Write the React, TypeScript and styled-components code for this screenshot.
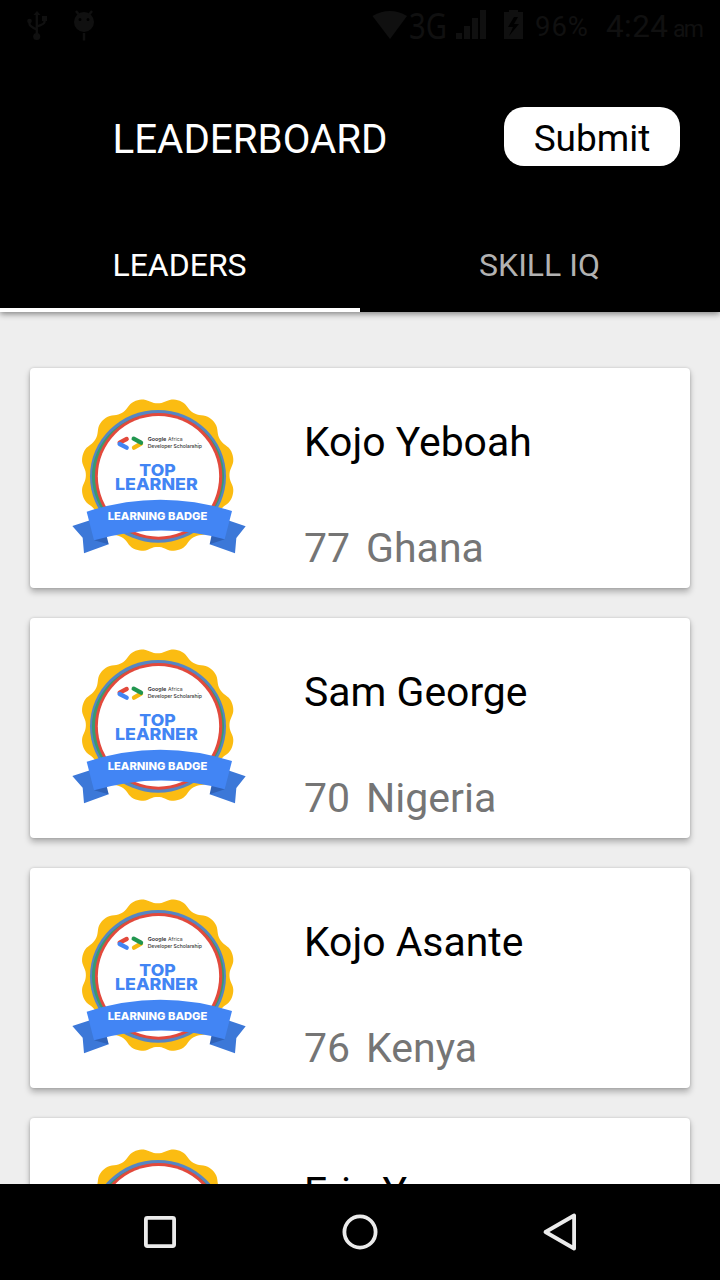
import React from "react";
import styled, { createGlobalStyle } from "styled-components";

const GlobalStyle = createGlobalStyle`
  * { box-sizing: border-box; }
  body { margin: 0; background: #000; }
`;

const Screen = styled.div`
  display: flex;
  flex-direction: column;
  width: 720px;
  height: 1280px;
  overflow: hidden;
  background: #eeeeee;
  font-family: Roboto, sans-serif;
`;

const Header = styled.header`
  position: relative;
  z-index: 1;
  flex: none;
  display: flex;
  flex-direction: column;
  height: 312px;
  background: #000;
  box-shadow: 0 2px 6px rgba(0, 0, 0, 0.45);
`;

const StatusBar = styled.div`
  display: flex;
  justify-content: space-between;
  height: 50px;
  color: #101010;
`;

const TopRow = styled.div`
  display: flex;
  align-items: center;
  justify-content: space-between;
  height: 172px;
  padding: 0 40px 0 112.5px;
`;

const Title = styled.h1`
  margin: 7px 0 0;
  font-size: 40.3px;
  line-height: 48px;
  font-weight: 400;
  color: #fff;
`;

const SubmitButton = styled.button`
  width: 176px;
  height: 59px;
  padding: 5px 0 0;
  border: 0;
  border-radius: 20px;
  background: #fff;
  color: #000;
  font-family: inherit;
  font-size: 37px;
  line-height: 54px;
`;

const Tabs = styled.nav`
  display: flex;
  height: 90px;
`;

const Tab = styled.div<{ $active?: boolean }>`
  flex: 1;
  padding: 22px 1px 0 0;
  border-bottom: 4px solid ${(p) => (p.$active ? "#fff" : "transparent")};
  color: ${(p) => (p.$active ? "#fff" : "#b2b2b2")};
  font-size: 32px;
  line-height: 42px;
  text-align: center;
`;

const List = styled.main`
  flex: 1;
  display: flex;
  flex-direction: column;
  gap: 30px;
  min-height: 0;
  overflow: hidden;
  padding: 56px 30px 0;
`;

const Card = styled.article`
  flex: none;
  display: flex;
  gap: 44px;
  height: 220px;
  padding: 17px 0 0 30px;
  border-radius: 4px;
  background: #fff;
  box-shadow: 0 4px 6px rgba(0, 0, 0, 0.27), 0 0 3px rgba(0, 0, 0, 0.16);
`;

const CardText = styled.div`
  display: flex;
  flex-direction: column;
  gap: 58px;
  padding-top: 33px;
  font-size: 41px;
  line-height: 48px;
  white-space: nowrap;
`;

const Name = styled.div`
  font-size: 40.9px;
  color: #000;
`;

const Detail = styled.div`
  display: flex;
  gap: 16px;
  color: #757575;
`;

const NavBar = styled.footer`
  flex: none;
  display: flex;
  align-items: center;
  justify-content: space-between;
  height: 96px;
  padding: 0 140px;
  background: #000;
`;

/* Outline of the twelve-lobed seal behind the badge. */
const sealPath = (() => {
  const points: string[] = [];
  for (let deg = 0; deg < 360; deg += 1.5) {
    const lobe = Math.tanh(-0.9 * Math.cos((12 * deg * Math.PI) / 180) + 0.25);
    const r = 222.5 + 12.5 * lobe;
    const a = (deg * Math.PI) / 180;
    points.push(`${(293 + r * Math.cos(a)).toFixed(1)} ${(270.5 + r * Math.sin(a)).toFixed(1)}`);
  }
  return `M${points.join("L")}Z`;
})();

const Badge = () => (
  <svg width="200" height="180" viewBox="0 0 600 540" fontFamily="Inter, sans-serif">
    <path d={sealPath} fill="#fbbc12" />
    <ellipse cx="294" cy="274" rx="204" ry="199" fill="#5585c4" />
    <ellipse cx="294" cy="274" rx="198" ry="188" fill="#3a9a70" />
    <ellipse cx="296" cy="274" rx="191" ry="190" fill="#e2493c" />
    <ellipse cx="295.5" cy="274" rx="182" ry="181" fill="#fff" />
    <g strokeWidth="13" strokeLinecap="round">
      <path d="M200 162L179 173" stroke="#e2493c" />
      <path d="M179 177L200 188" stroke="#4285f4" />
      <path d="M222 188L243 176" stroke="#f5b912" />
      <path d="M221 161L243 173" stroke="#21964f" />
    </g>
    <text x="263" y="168" fontSize="16" fontWeight="600" fill="#333" textLength="56" lengthAdjust="spacingAndGlyphs">Google</text>
    <text x="324" y="168" fontSize="16" fill="#444" textLength="44" lengthAdjust="spacingAndGlyphs">Africa</text>
    <text x="263" y="189" fontSize="16" fontWeight="500" fill="#333" textLength="163" lengthAdjust="spacingAndGlyphs">Developer Scholarship</text>
    <g fill="#4285f4" fontWeight="800" fontSize="49">
      <text x="238" y="272" textLength="109" lengthAdjust="spacingAndGlyphs">TOP</text>
      <text x="165" y="316" textLength="248" lengthAdjust="spacingAndGlyphs">LEARNER</text>
    </g>
    <path d="M37 423L90 406L146 478L72 505L68 458Z" fill="#3c78d8" />
    <path d="M557 424L504 406L449 478L525 505L529 459Z" fill="#3c78d8" />
    <path d="M102 466L138 445L146 478Z" fill="#2f62b8" />
    <path d="M494 463L456 445L449 478Z" fill="#2f62b8" />
    <path d="M80 380Q298 309 516 378L494 463Q298 408 102 466Z" fill="#4285f4" />
    <text x="143" y="405" fontSize="33" fontWeight="800" fill="#fff" textLength="299" lengthAdjust="spacingAndGlyphs">LEARNING BADGE</text>
  </svg>
);

const NoticeIcons = () => (
  <svg width="110" height="50" viewBox="0 0 110 50" fill="currentColor" stroke="currentColor">
    <path d="M37 11l3.5 4h-7z" stroke="none" />
    <circle cx="36.7" cy="36.5" r="3.5" stroke="none" />
    <circle cx="29.5" cy="21" r="2.3" stroke="none" />
    <path d="M42 16h5v5h-5z" stroke="none" />
    <path d="M36.8 14v21M29.5 21v3q0 2 7 5.5M44.5 19v3q0 2 -7.5 4.5" fill="none" strokeWidth="2.3" />
    <path d="M76 11l4 5M92 11l-4 5M84 33v7.5" fill="none" strokeWidth="2.4" />
    <path fillRule="evenodd" stroke="none" d="M84 12a10 10 0 1 0 0 20a10 10 0 1 0 0-20zM80 18a1.5 1.5 0 1 1 0 3a1.5 1.5 0 1 1 0-3zM88 18a1.5 1.5 0 1 1 0 3a1.5 1.5 0 1 1 0-3z" />
  </svg>
);

const SystemIcons = () => (
  <svg width="360" height="50" viewBox="0 0 360 50" fill="currentColor">
    <path d="M12.5 16q17.5-10 34.5 0L30 39z" />
    <text x="49" y="39" fontSize="36" fontFamily="Noto Sans" textLength="38" lengthAdjust="spacingAndGlyphs">3G</text>
    <path d="M96 33h6v6h-6zM104 26h6v13h-6zM112 18h6v21h-6zM120 10h6v29h-6z" />
    <path fillRule="evenodd" d="M144 12h5v-2h9v2h5v27h-19zM154 17l-6 10h5l-4 9l10-12h-5l4-7z" />
    <text x="175" y="36" fontSize="27.5" textLength="53">96%</text>
    <text x="246" y="37" fontSize="31.5" textLength="62">4:24</text>
    <text x="313" y="37" fontSize="23" textLength="31">am</text>
  </svg>
);

const leaders = [
  { name: "Kojo Yeboah", score: 77, country: "Ghana" },
  { name: "Sam George", score: 70, country: "Nigeria" },
  { name: "Kojo Asante", score: 76, country: "Kenya" },
  { name: "Eric Young", score: 75, country: "Ghana" },
];

export default function App() {
  return (
    <Screen>
      <GlobalStyle />
      <Header>
        <StatusBar>
          <NoticeIcons />
          <SystemIcons />
        </StatusBar>
        <TopRow>
          <Title>LEADERBOARD</Title>
          <SubmitButton>Submit</SubmitButton>
        </TopRow>
        <Tabs>
          <Tab $active>LEADERS</Tab>
          <Tab>SKILL IQ</Tab>
        </Tabs>
      </Header>
      <List>
        {leaders.map((l) => (
          <Card key={l.name}>
            <Badge />
            <CardText>
              <Name>{l.name}</Name>
              <Detail>
                <span>{l.score}</span>
                <span>{l.country}</span>
              </Detail>
            </CardText>
          </Card>
        ))}
      </List>
      <NavBar>
        <svg width="40" height="40" fill="none" stroke="#ebebeb" strokeWidth="3.8">
          <rect x="5.9" y="5.9" width="28.2" height="28.2" rx="1.5" />
        </svg>
        <svg width="40" height="40" fill="none" stroke="#ebebeb" strokeWidth="3.8">
          <circle cx="20" cy="20" r="15.6" />
        </svg>
        <svg width="40" height="40" fill="none" stroke="#ebebeb" strokeWidth="3.8" strokeLinejoin="round">
          <path d="M34.1 3.5v33L5.5 20z" />
        </svg>
      </NavBar>
    </Screen>
  );
}
